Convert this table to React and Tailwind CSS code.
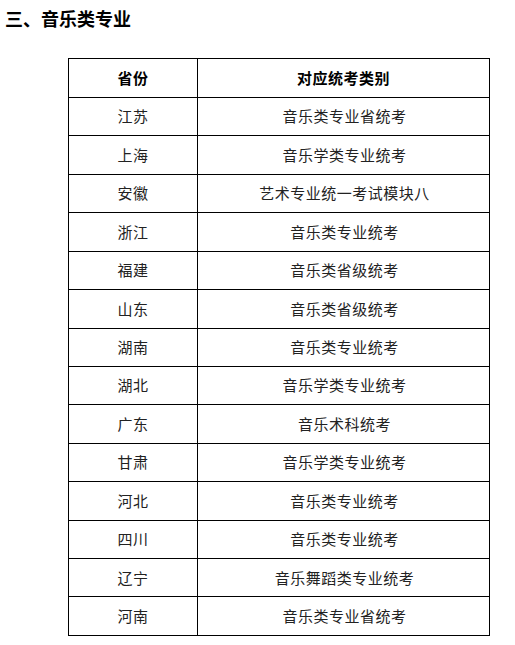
import React from "react";

const rows = [
  ["江苏", "音乐类专业省统考"],
  ["上海", "音乐学类专业统考"],
  ["安徽", "艺术专业统一考试模块八"],
  ["浙江", "音乐类专业统考"],
  ["福建", "音乐类省级统考"],
  ["山东", "音乐类省级统考"],
  ["湖南", "音乐类专业统考"],
  ["湖北", "音乐学类专业统考"],
  ["广东", "音乐术科统考"],
  ["甘肃", "音乐学类专业统考"],
  ["河北", "音乐类专业统考"],
  ["四川", "音乐类专业统考"],
  ["辽宁", "音乐舞蹈类专业统考"],
  ["河南", "音乐类专业省统考"],
];

export default function App() {
  return (
    <div
      className="w-[515px] h-[645px] bg-white overflow-hidden"
      style={{ fontFamily: '"Noto Sans CJK SC", "Noto Sans", sans-serif' }}
    >
      <div className="pl-[5px] pt-[4px] h-[58px]">
        <h1 className="text-[18px] font-bold leading-[28px] text-black tracking-[0px]">
          三、音乐类专业
        </h1>
      </div>
      <div className="ml-[68px] w-[422px] border border-black">
        <div className="flex h-[38px] text-[15px] font-bold text-black tracking-[0.5px]">
          <div className="w-[129px] border-r border-black flex items-center justify-center">
            省份
          </div>
          <div className="flex-1 flex items-center justify-center">对应统考类别</div>
        </div>
        {rows.map(([p, c]) => (
          <div
            key={p}
            className="flex h-[38.43px] border-t border-black text-[15px] text-[#222] tracking-[0.5px]"
          >
            <div className="w-[129px] border-r border-black flex items-center justify-center">
              {p}
            </div>
            <div className="flex-1 flex items-center justify-center pl-[2px]">{c}</div>
          </div>
        ))}
      </div>
    </div>
  );
}
